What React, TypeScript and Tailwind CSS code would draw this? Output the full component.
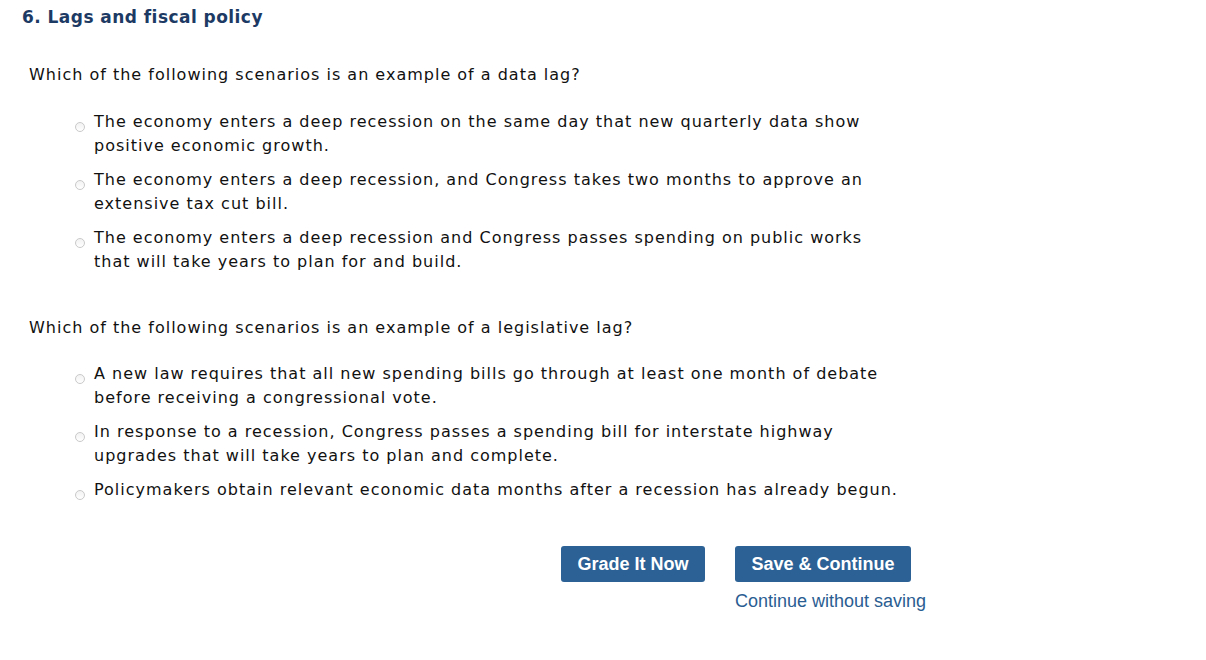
import React from "react";

const q1 = [
  ["The economy enters a deep recession on the same day that new quarterly data show", "positive economic growth."],
  ["The economy enters a deep recession, and Congress takes two months to approve an", "extensive tax cut bill."],
  ["The economy enters a deep recession and Congress passes spending on public works", "that will take years to plan for and build."],
];
const q2 = [
  ["A new law requires that all new spending bills go through at least one month of debate", "before receiving a congressional vote."],
  ["In response to a recession, Congress passes a spending bill for interstate highway", "upgrades that will take years to plan and complete."],
  ["Policymakers obtain relevant economic data months after a recession has already begun."],
];

function Option({ lines }: { lines: string[] }) {
  return (
    <label className="flex items-start">
      <span className="mt-[12px] ml-[46px] mr-[9px] h-[10px] w-[10px] shrink-0 rounded-full border border-[#c9c9c9] bg-gradient-to-b from-[#f2f2f2] to-white" />
      <span className="w-[860px] whitespace-nowrap text-[16px] leading-[24px] tracking-[1px] text-[#111]">
        {lines.map((l) => (
          <span key={l} className="block">
            {l}
          </span>
        ))}
      </span>
    </label>
  );
}

export default function App() {
  return (
    <div className="min-h-[660px] w-[1206px] bg-white font-['DejaVu_Sans',Verdana,sans-serif]">
      <h1 className="pl-[22px] pt-[6px] text-[17px] font-bold leading-[22px] tracking-[0.45px] text-[#1c3a64]">
        6. Lags and fiscal policy
      </h1>
      <div className="pl-[29px]">
        <p className="mt-[35px] text-[16px] leading-[24px] tracking-[1px] text-[#111]">
          Which of the following scenarios is an example of a data lag?
        </p>
        <div className="mt-[23px] flex flex-col gap-[10px]">
          {q1.map((t) => (
            <Option key={t[0]} lines={t} />
          ))}
        </div>
        <p className="mt-[42px] text-[16px] leading-[24px] tracking-[1px] text-[#111]">
          Which of the following scenarios is an example of a legislative lag?
        </p>
        <div className="mt-[22px] flex flex-col gap-[10px]">
          {q2.map((t) => (
            <Option key={t[0]} lines={t} />
          ))}
        </div>
      </div>
      <div className="mt-[44px] flex pl-[561px] font-['Liberation_Sans',Arial,sans-serif]">
        <button className="h-[36px] w-[144px] rounded-[3px] bg-[#2b6195] text-[18px] font-bold text-white">
          Grade It Now
        </button>
        <div className="ml-[30px] flex flex-col">
          <button className="h-[36px] w-[176px] rounded-[3px] bg-[#2b6195] text-[18px] font-bold text-white">
            Save &amp; Continue
          </button>
          <a className="mt-[8px] text-[18px] leading-[22px] text-[#2a5d92]">Continue without saving</a>
        </div>
      </div>
    </div>
  );
}
